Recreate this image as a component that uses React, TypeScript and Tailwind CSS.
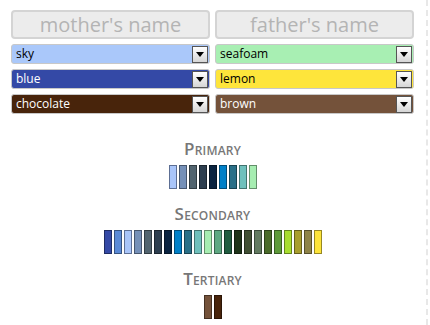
import React from 'react';

const primary = [
  ['#a9c5f9', '#5d6f94'],
  ['#7590b8', '#46566e'],
  ['#52646f', '#313c42'],
  ['#2d3e4f', '#1b252f'],
  ['#0a2340', '#061526'],
  ['#0080c8', '#004c78'],
  ['#2a7088', '#194351'],
  ['#6fc0bc', '#427370'],
  ['#a6edb1', '#638e6a'],
];

const secondary = [
  ['#3449a6', '#1f2c63'],
  ['#5b8ad6', '#365380'],
  ['#a9c5f9', '#5d6f94'],
  ['#7590b8', '#46566e'],
  ['#52646f', '#313c42'],
  ['#2d3e4f', '#1b252f'],
  ['#0a2340', '#061526'],
  ['#0080c8', '#004c78'],
  ['#2a7088', '#194351'],
  ['#6fc0bc', '#427370'],
  ['#a6edb1', '#638e6a'],
  ['#5ea882', '#38644e'],
  ['#205c40', '#133726'],
  ['#1e3319', '#121e0f'],
  ['#404f33', '#262f1e'],
  ['#627a60', '#3a4939'],
  ['#4a6b2a', '#2c4019'],
  ['#5e9a3a', '#385c22'],
  ['#a8de2f', '#64851c'],
  ['#a89e2e', '#645e1b'],
  ['#8e8348', '#554e2b'],
  ['#fde43a', '#978822'],
];

const tertiary = [
  ['#74523a', '#453122'],
  ['#48240b', '#2b1506'],
];

export default function App() {
  return (
    <div className="w-[430px] h-[325px] bg-white flex overflow-hidden" style={{ fontFamily: '"Open Sans", sans-serif' }}>
      <div className="w-[426px] pl-[11px] pr-[12px] pt-[10px] flex flex-col">
        <div className="grid grid-cols-2 gap-x-[5px]">
          <NameBox label="mother's name" />
          <NameBox label="father's name" />
        </div>

        <div className="grid grid-cols-2 gap-x-[5px] gap-y-[5px] mt-[5px]">
          <Select label="sky" bg="bg-[#aac8fa]" text="text-black" />
          <Select label="seafoam" bg="bg-[#a8efb3]" text="text-black" />
          <Select label="blue" bg="bg-[#3449a6]" text="text-white" />
          <Select label="lemon" bg="bg-[#fee53b]" text="text-black" />
          <Select label="chocolate" bg="bg-[#48240b]" text="text-white" />
          <Select label="brown" bg="bg-[#74523a]" text="text-white" />
        </div>

        <Section title="Primary" colors={primary} className="mt-[25px]" />
        <Section title="Secondary" colors={secondary} className="mt-[15px]" />
        <Section title="Tertiary" colors={tertiary} className="mt-[15px]" />
      </div>
      <div className="w-[2px] h-full border-l-2 border-dashed border-[#e8e8e8]" />
    </div>
  );
}

function NameBox({ label }: { label: string }) {
  return (
    <div className="h-[29px] rounded-[4px] border-2 border-[#d4d4d4] bg-[#ececec] flex items-center justify-center text-[20px] leading-none text-[#b4b4b4]">
      {label}
    </div>
  );
}

function Select({ label, bg, text }: { label: string; bg: string; text: string }) {
  return (
    <div className={`h-[20px] rounded-[3px] border border-[#c8c8c8] ${bg} ${text} flex items-center justify-between pl-[4px] pr-[1px] text-[12px]`}>
      <span className="leading-none">{label}</span>
      <div className="w-[16px] h-[17px] border border-[#555] bg-gradient-to-b from-white to-[#d6d6d6] flex items-center justify-center">
        <svg width="8" height="5" viewBox="0 0 8 5">
          <path d="M0 0H8L4 5Z" fill="#000" />
        </svg>
      </div>
    </div>
  );
}

function Section({ title, colors, className }: { title: string; colors: string[][]; className?: string }) {
  return (
    <div className={`flex flex-col items-center ${className ?? ''}`}>
      <div className="text-[17px] leading-[20px] font-semibold text-[#777777] [font-variant:small-caps] tracking-[0.2px]">
        {title}
      </div>
      <div className="flex gap-[2px] mt-[6px]">
        {colors.map(([fill, border], i) => (
          <div key={i} className="w-[8px] h-[24px] border" style={{ backgroundColor: fill, borderColor: border }} />
        ))}
      </div>
    </div>
  );
}
